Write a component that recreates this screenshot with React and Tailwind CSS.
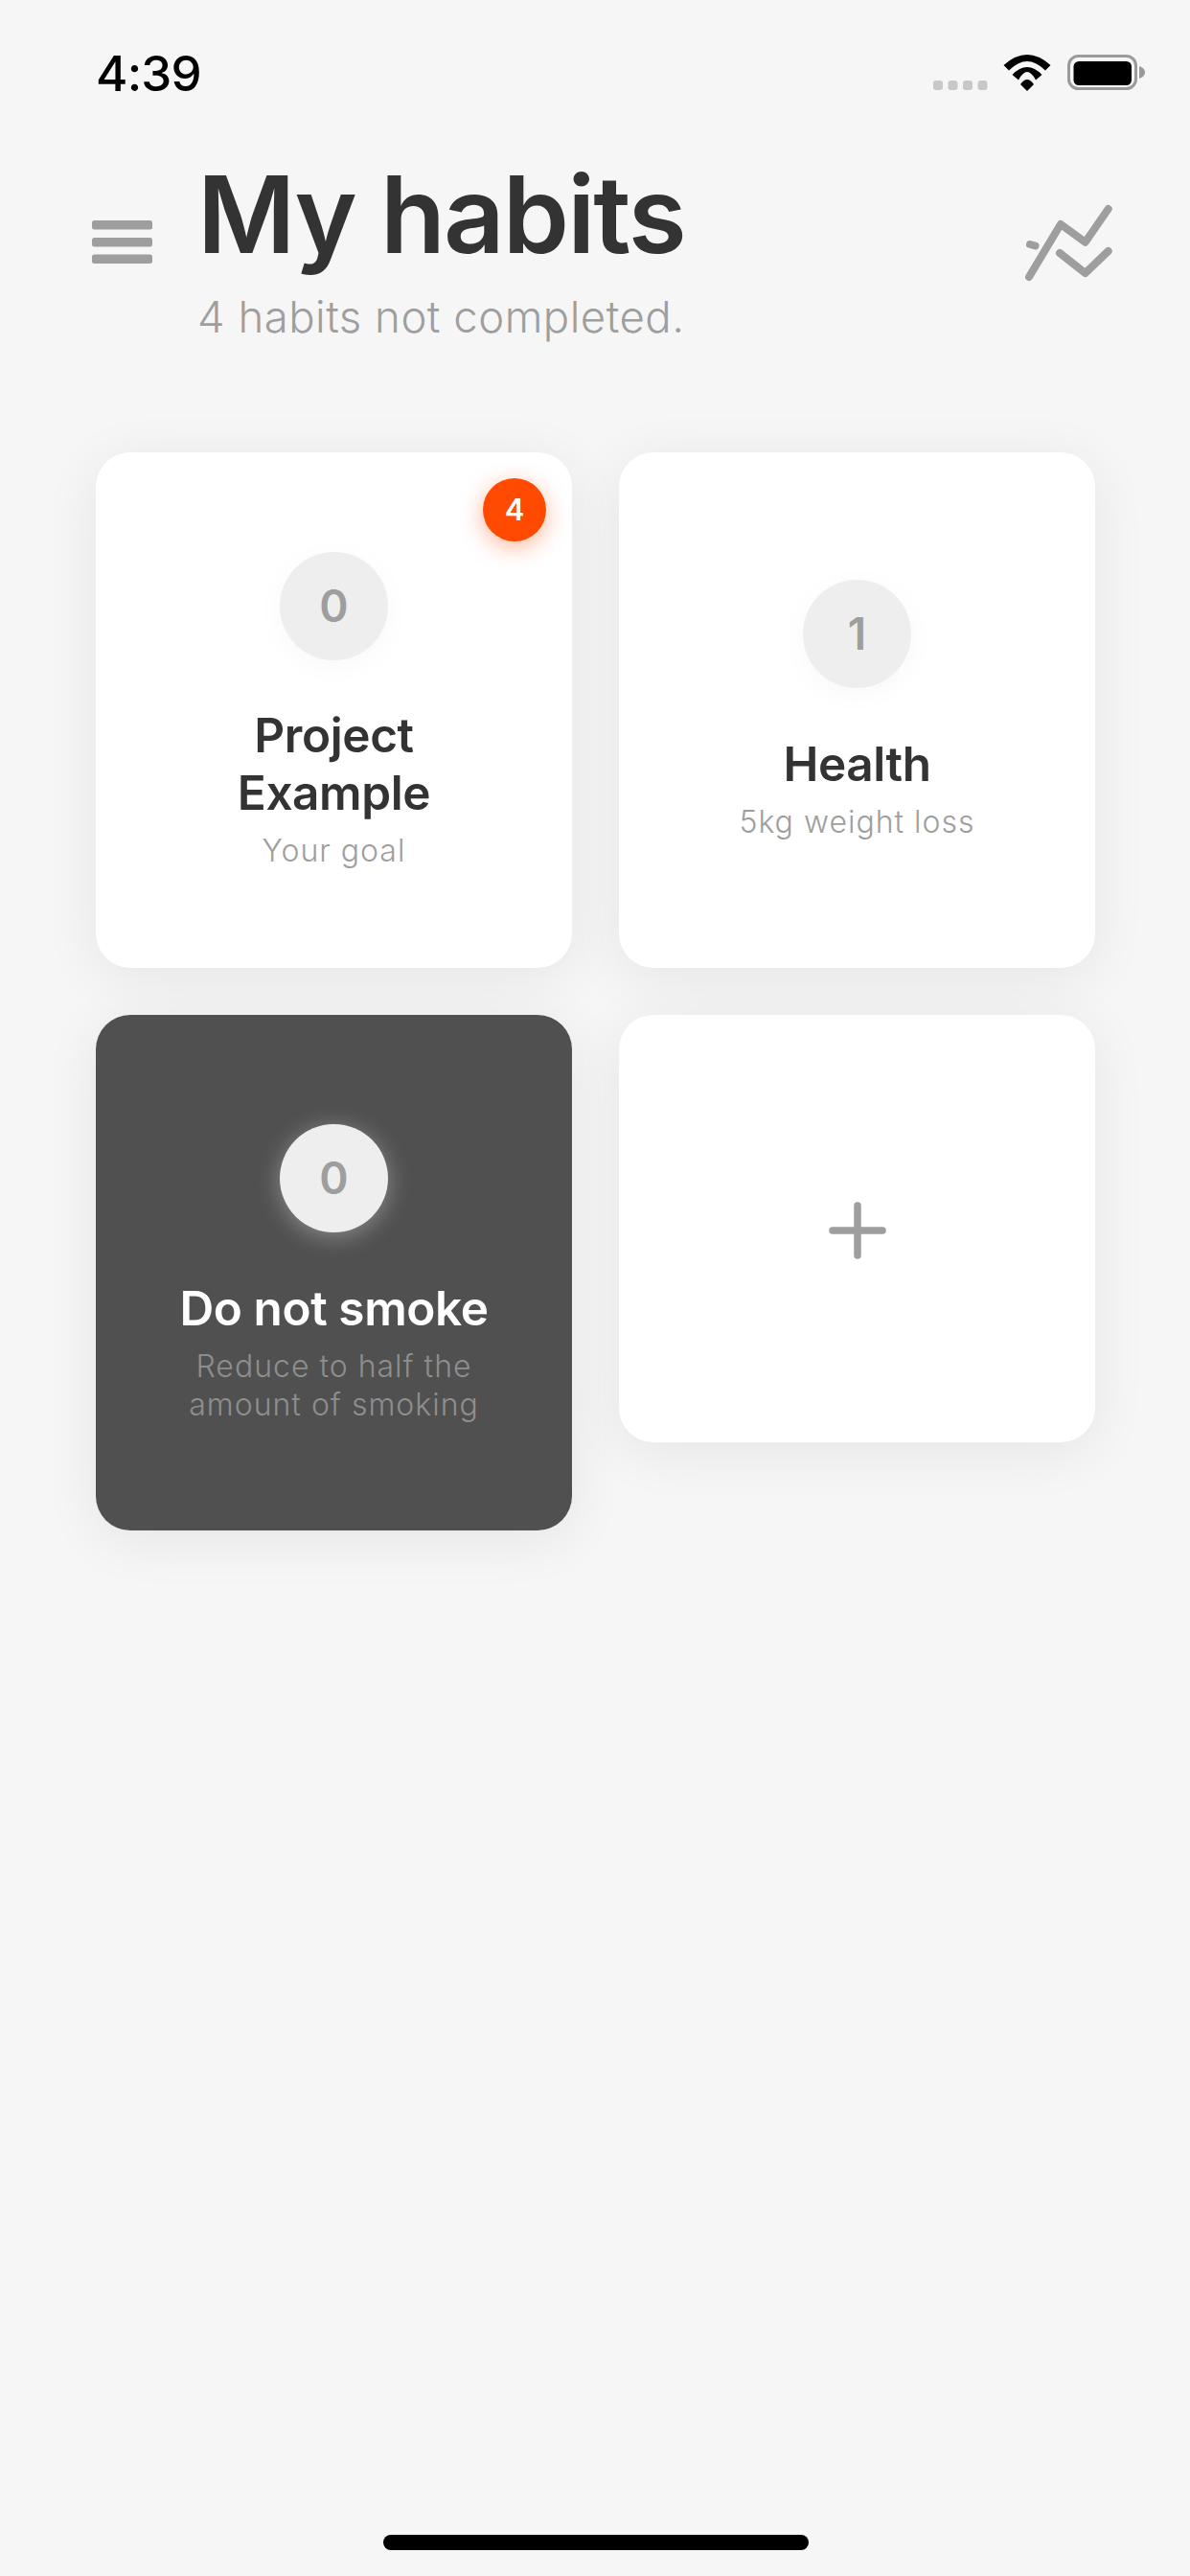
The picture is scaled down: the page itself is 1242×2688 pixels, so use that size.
const sans = "font-['Inter','Liberation_Sans',sans-serif]";

function Habit({ count, title, sub, dark, badge, pt, gap }) {
  return (
    <div className={`relative h-[538px] rounded-[36px] flex flex-col items-center ${pt} ${dark ? "bg-[#505050] shadow-[0_10px_60px_rgba(0,0,0,0.07)]" : "bg-white shadow-[0_10px_60px_rgba(0,0,0,0.07)]"}`}>
      {badge && (
        <div className="absolute top-[27px] right-[27px] w-[66px] h-[66px] rounded-full bg-[#ff4a00] flex items-center justify-center text-white text-[31px] font-semibold shadow-[0_6px_24px_rgba(255,74,0,0.4)]">
          {badge}
        </div>
      )}
      <div className={`w-[113px] h-[113px] rounded-full bg-[#eeeeee] flex items-center justify-center text-[#9e9e9e] text-[46px] font-semibold ${dark ? "shadow-[0_4px_24px_rgba(255,255,255,0.35)]" : "shadow-[0_6px_30px_rgba(0,0,0,0.03)]"}`}>
        {count}
      </div>
      <div className={`${gap} w-[345px] text-center text-[49.5px] leading-[60px] font-semibold tracking-[-0.4px] ${dark ? "text-white" : "text-[#333333]"}`}>
        {title}
      </div>
      <div className={`mt-[11px] w-[340px] text-center text-[32px] leading-[40px] font-light tracking-[1px] ${dark ? "text-[#8e8e8e]" : "text-[#9e9e9e]"}`}>
        {sub}
      </div>
    </div>
  );
}

export default function App() {
  return (
    <div className={`${sans} w-[1242px] h-[2688px] bg-[#f6f6f6] flex flex-col`}>
      <div className="h-[150px] pl-[100px] pr-[46px] pt-[50px] flex justify-between items-start">
        <span className="text-[51px] leading-[54px] font-medium tracking-[-0.8px] text-black">4:39</span>
        <div className="flex items-start">
          <svg width="60" height="12" viewBox="0 0 60 12" className="mt-[33px] mr-[12px]">
            <rect x="0" y="1" width="10" height="10" rx="3" fill="#c8c8c8" />
            <rect x="15.5" y="1" width="10" height="10" rx="3" fill="#c8c8c8" />
            <rect x="31" y="1" width="10" height="10" rx="3" fill="#c8c8c8" />
            <rect x="46.5" y="1" width="10" height="10" rx="3" fill="#c8c8c8" />
          </svg>
          <svg width="52" height="38" viewBox="0 0 52 38" className="mt-[7px]">
            <path d="M1.5 11 Q26 -11 50.5 11 L45 16.5 Q26 -2.5 7 16.5 Z" fill="#000" />
            <path d="M10.5 21 Q26 5 41.5 21 L35 26.5 Q26 9.5 17 26.5 Z" fill="#000" />
            <path d="M19 31 Q26 21 33 31 L26 38 Z" fill="#000" />
          </svg>
          <svg width="82" height="38" viewBox="0 0 82 38" className="ml-[16px] mt-[7px]">
            <rect x="1.5" y="1.5" width="70" height="34" rx="10" fill="none" stroke="#9a9a9a" strokeWidth="3" />
            <rect x="6.5" y="7" width="60.5" height="25" rx="5.5" fill="#000" />
            <path d="M75 12 C78 13 81 15 81 18.5 C81 22 78 24 75 25 Z" fill="#9a9a9a" />
          </svg>
        </div>
      </div>

      <div className="h-[322px] pl-[96px] pr-[80px] flex justify-between items-start">
        <div className="flex items-start">
          <svg width="63" height="45" viewBox="0 0 63 45" className="mt-[80px]">
            <rect x="0" y="0" width="63" height="9.5" rx="2.5" fill="#9e9e9e" />
            <rect x="0" y="18" width="63" height="9.5" rx="2.5" fill="#9e9e9e" />
            <rect x="0" y="35.5" width="63" height="9.5" rx="2.5" fill="#9e9e9e" />
          </svg>
          <div className="ml-[47px] mt-[12px]">
            <div className="text-[111px] leading-[124px] font-semibold tracking-[-1.9px] text-[#333333]">My habits</div>
            <div className="mt-[17px] text-[45.5px] leading-[56px] text-[#9e9e9e] font-light tracking-[0.5px]">4 habits not completed.</div>
          </div>
        </div>
        <svg width="94" height="82" viewBox="0 0 94 82" className="mt-[62px]" fill="none" stroke="#9e9e9e" strokeWidth="8" strokeLinecap="round" strokeLinejoin="round">
          <path d="M6 77 L39 22 L64.7 40.7 L88.7 6" />
          <path d="M38 52 L64.7 73 L88.7 50" />
          <path d="M7 43 L12.5 44.5" />
        </svg>
      </div>

      <div className="pl-[100px] pr-[99px] grid grid-cols-2 gap-x-[49px] gap-y-[49px] items-start">
        <Habit count="0" title="Project Example" sub="Your goal" badge="4" pt="pt-[104px]" gap="mt-[48px]" />
        <Habit count="1" title="Health" sub="5kg weight loss" pt="pt-[133px]" gap="mt-[49px]" />
        <Habit count="0" title="Do not smoke" sub="Reduce to half the amount of smoking" dark pt="pt-[114px]" gap="mt-[49px]" />
        <div className="h-[446px] pt-[3px] rounded-[36px] bg-white shadow-[0_10px_60px_rgba(0,0,0,0.07)] flex items-center justify-center">
          <svg width="60" height="60" viewBox="0 0 60 60" fill="none" stroke="#9e9e9e" strokeWidth="7.5" strokeLinecap="round">
            <path d="M30 4 V56 M4 30 H56" />
          </svg>
        </div>
      </div>

      <div className="mt-auto mb-[27px] ml-[400px] self-start w-[444px] h-[16px] rounded-full bg-black" />
    </div>
  );
}
